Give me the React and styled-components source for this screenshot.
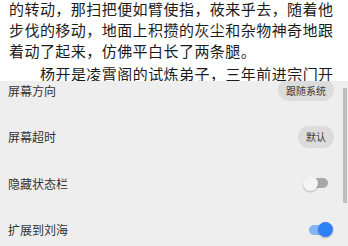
import React from 'react'
import styled, { createGlobalStyle } from 'styled-components'

const GlobalStyle = createGlobalStyle`
    html, body {
        margin: 0;
        padding: 0;
        background: #fff;
    }
    body {
        width: 348px;
        height: 246px;
        overflow: hidden;
        font-family: "Noto Sans CJK SC", "Noto Sans", sans-serif;
    }
`

const Page = styled.div`
    position: relative;
    width: 348px;
    height: 246px;
    overflow: hidden;
    background: #fff;
`

const Reader = styled.div`
    padding: 0 10px 0 9px;
    margin-top: -2px;
    color: #1b1b1b;
    font-size: 15px;
    line-height: 21px;
    letter-spacing: 0.45px;
`

const Para = styled.p`
    margin: 0 0 2px;
    text-indent: ${p => (p.$indent ? '31px' : '0')};
`

// settings sheet lying over the reader page
const Sheet = styled.div`
    position: absolute;
    left: 0;
    right: 0;
    top: 81px;
    bottom: 0;
    background: #eeeeee;
    overflow: hidden;
`

// list is scrolled a little, first row partly hidden
const List = styled.div`
    margin-top: -14.33px;
    display: flex;
    flex-direction: column;
`

const Row = styled.div`
    height: 46.67px;
    display: flex;
    align-items: center;
    justify-content: space-between;
    padding: 0 14px 0 8px;
`

const Label = styled.span`
    font-size: 12px;
    color: #333;
`

const Pill = styled.span`
    height: 22px;
    padding: 0 8px;
    border-radius: 11px;
    background: #dcdcdc;
    color: #3a3a3a;
    font-size: 10px;
    display: flex;
    align-items: center;
`

const Track = styled.div`
    width: 19px;
    height: 10px;
    margin: 0 6px 0 6px;
    border-radius: 5px;
    display: flex;
    align-items: center;
    justify-content: ${p => (p.$on ? 'flex-end' : 'flex-start')};
    background: ${p => (p.$on ? '#84b3f6' : '#a8a8a8')};
`

const Thumb = styled.div`
    flex: none;
    width: 15px;
    height: 15px;
    margin: ${p => (p.$on ? '0 -5px 0 0' : '0 0 0 -6px')};
    border-radius: 50%;
    background: ${p => (p.$on ? '#2f7ff7' : '#f4f4f4')};
    box-shadow: 0 1px 2px rgba(0, 0, 0, 0.25);
`

const Scrollbar = styled.div`
    position: absolute;
    right: 1px;
    top: 7px;
    width: 4px;
    height: 115px;
    background: #bdbdbd;
`

const Toggle = ({ on }) => (
    <Track $on={on}>
        <Thumb $on={on} />
    </Track>
)

const settings = [
    { label: '屏幕方向', pill: '跟随系统' },
    { label: '屏幕超时', pill: '默认' },
    { label: '隐藏状态栏', toggle: false },
    { label: '扩展到刘海', toggle: true }
]

const App = () => (
    <Page>
        <GlobalStyle />
        <Reader>
            <Para>
                的转动，那扫把便如臂使指，莜来乎去，随着他步伐的移动，地面上积攒的灰尘和杂物神奇地跟着动了起来，仿佛平白长了两条腿。
            </Para>
            <Para $indent>
                杨开是凌霄阁的试炼弟子，三年前进宗门开始修炼，至今仍是开元境三层的修为，每日在宗门里打扫杂物。
            </Para>
        </Reader>
        <Sheet>
            <List>
                {settings.map(s => (
                    <Row key={s.label}>
                        <Label>{s.label}</Label>
                        {s.pill ? <Pill>{s.pill}</Pill> : <Toggle on={s.toggle} />}
                    </Row>
                ))}
            </List>
            <Scrollbar />
        </Sheet>
    </Page>
)

export default App
